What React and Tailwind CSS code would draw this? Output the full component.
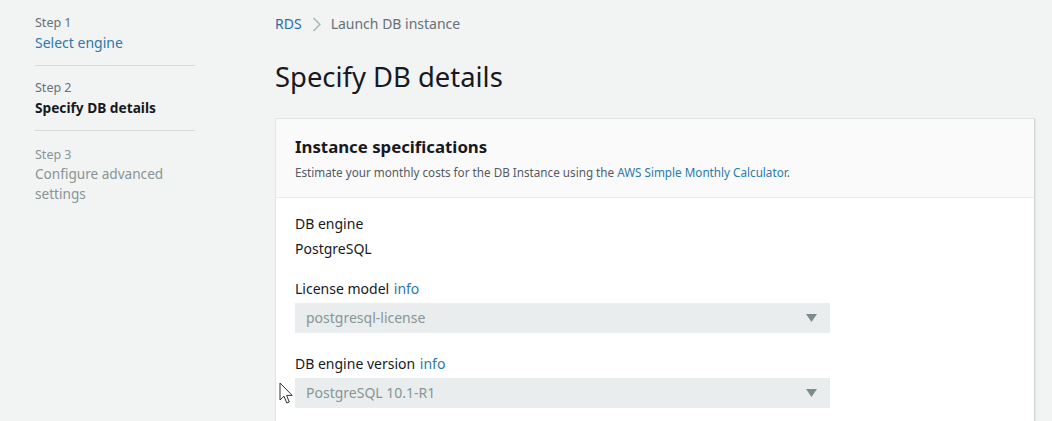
import React from "react";

const font = { fontFamily: '"Noto Sans", "Open Sans", sans-serif' };

function Select({ value }) {
  return (
    <div className="relative flex h-[30px] w-[535px] items-center bg-[#eaeded] pl-[11px] text-[14px] text-[#879596]">
      <span>{value}</span>
      <svg className="absolute right-[13px] top-[11px]" width="11" height="8" viewBox="0 0 11 8">
        <polygon points="0,0 11,0 5.5,8" fill="#7d8b8c" />
      </svg>
    </div>
  );
}

export default function App() {
  return (
    <div className="relative flex h-[421px] w-[1052px] overflow-hidden bg-[#f2f3f3] text-[#16191f]" style={font}>
      {/* Sidebar */}
      <div className="w-[275px] shrink-0 pl-[35px] pr-[80px] pt-[14px]">
        <div className="border-b border-[#d5dbdb] pb-[11px]">
          <div className="text-[12.5px] leading-[18px] text-[#687078]">Step 1</div>
          <div className="text-[14px] leading-[22px] text-[#2b79ad]">Select engine</div>
        </div>
        <div className="border-b border-[#d5dbdb] pb-[11px] pt-[13px]">
          <div className="text-[12.5px] leading-[18px] text-[#687078]">Step 2</div>
          <div className="text-[13.7px] font-bold leading-[22px]">Specify DB details</div>
        </div>
        <div className="pt-[14px]">
          <div className="text-[12.5px] leading-[19px] text-[#879596]">Step 3</div>
          <div className="text-[13.6px] leading-[20px] text-[#879596]">Configure advanced settings</div>
        </div>
      </div>

      {/* Main */}
      <div className="flex-1 pr-[17px] pt-[14px]">
        <div className="flex items-center text-[14px] leading-[20px]">
          <span className="text-[#2b6ea5]">RDS</span>
          <svg className="mx-[10px]" width="9" height="15" viewBox="0 0 9 15">
            <path d="M1.5 1 L7.8 7.5 L1.5 14" fill="none" stroke="#aab7b8" strokeWidth="1.5" />
          </svg>
          <span className="text-[#687078]">Launch DB instance</span>
        </div>
        <h1 className="mt-[25px] text-[27.4px] font-normal leading-[36px]">Specify DB details</h1>

        <div className="mt-[23px] border border-[#e1e4e4] border-r-[#cfd4d4] bg-white shadow-[1px_1px_1px_rgba(0,0,0,0.05)]">
          <div className="border-b border-[#eaeded] bg-[#fafafa] px-[19px] pb-[16px] pt-[16px]">
            <div className="text-[16.8px] font-bold leading-[24px]">Instance specifications</div>
            <div className="mt-[4px] text-[11.7px] leading-[18px] text-[#545b64]">
              Estimate your monthly costs for the DB Instance using the{" "}
              <span className="text-[#2b79ad]">AWS Simple Monthly Calculator</span>.
            </div>
          </div>
          <div className="px-[19px] pb-[20px] pt-[16px] text-[14px] leading-[20px]">
            <div>DB engine</div>
            <div className="mt-[5px]">PostgreSQL</div>
            <div className="mt-[20px]">
              License model <span className="ml-[1px] text-[#2b79ad]">info</span>
            </div>
            <div className="mt-[4px]">
              <Select value="postgresql-license" />
            </div>
            <div className="mt-[21px]">
              DB engine version <span className="ml-[1px] text-[#2b79ad]">info</span>
            </div>
            <div className="mt-[4px]">
              <Select value="PostgreSQL 10.1-R1" />
            </div>
          </div>
        </div>
      </div>

      {/* Mouse cursor overlay */}
      <svg className="absolute left-[279px] top-[382px]" width="15" height="23" viewBox="0 0 15 23">
        <path d="M1 1 L1 18 L5 14.2 L7.8 21 L10.3 20 L7.6 13.4 L13.2 13.4 Z" fill="#fff" stroke="#333" strokeWidth="1" strokeLinejoin="round" />
      </svg>
    </div>
  );
}
